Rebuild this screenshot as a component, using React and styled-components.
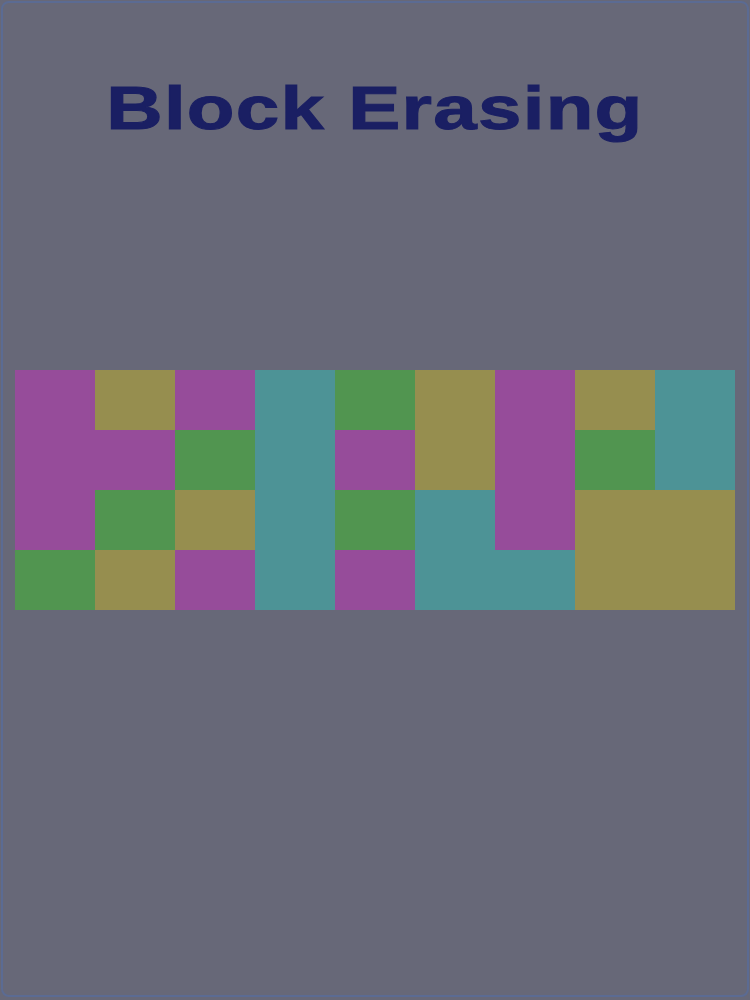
import React from "react";
import styled, { createGlobalStyle } from "styled-components";

const colors = {
  magenta: "#964c9a",
  olive: "#968e4f",
  green: "#519550",
  teal: "#4d9396",
};

// col, row start at 1; w/h in cells
const blocks = [
  { col: 1, row: 1, w: 1, h: 3, c: "magenta" },
  { col: 2, row: 2, w: 1, h: 1, c: "magenta" },
  { col: 1, row: 4, w: 1, h: 1, c: "green" },
  { col: 2, row: 1, w: 1, h: 1, c: "olive" },
  { col: 2, row: 3, w: 1, h: 1, c: "green" },
  { col: 2, row: 4, w: 1, h: 1, c: "olive" },
  { col: 3, row: 1, w: 1, h: 1, c: "magenta" },
  { col: 3, row: 2, w: 1, h: 1, c: "green" },
  { col: 3, row: 3, w: 1, h: 1, c: "olive" },
  { col: 3, row: 4, w: 1, h: 1, c: "magenta" },
  { col: 4, row: 1, w: 1, h: 4, c: "teal" },
  { col: 5, row: 1, w: 1, h: 1, c: "green" },
  { col: 5, row: 2, w: 1, h: 1, c: "magenta" },
  { col: 5, row: 3, w: 1, h: 1, c: "green" },
  { col: 5, row: 4, w: 1, h: 1, c: "magenta" },
  { col: 6, row: 1, w: 1, h: 2, c: "olive" },
  { col: 6, row: 3, w: 1, h: 2, c: "teal" },
  { col: 7, row: 4, w: 1, h: 1, c: "teal" },
  { col: 7, row: 1, w: 1, h: 3, c: "magenta" },
  { col: 8, row: 1, w: 1, h: 1, c: "olive" },
  { col: 8, row: 2, w: 1, h: 1, c: "green" },
  { col: 9, row: 1, w: 1, h: 2, c: "teal" },
  { col: 8, row: 3, w: 2, h: 2, c: "olive" },
];

export default function App() {
  return (
    <>
      <Global />
      <Frame>
        <Titulo>Block Erasing</Titulo>
        <Tabuleiro>
          {blocks.map((b, i) => (
            <Bloco key={i} $col={b.col} $row={b.row} $w={b.w} $h={b.h} $cor={colors[b.c]} />
          ))}
        </Tabuleiro>
      </Frame>
    </>
  );
}

const Global = createGlobalStyle`
  html, body {
    margin: 0;
    padding: 0;
    background: #676878;
  }
`;

const Frame = styled.div`
  box-sizing: border-box;
  width: 748px;
  height: 996px;
  margin: 1px;
  border: 2px solid #5b6b93;
  border-radius: 8px;
  background: #676878;

  display: flex;
  flex-direction: column;
  align-items: center;
`;

const Titulo = styled.h1`
  margin: 75px 0 0 0;
  font-family: "Liberation Sans", Arial, sans-serif;
  font-weight: bold;
  font-size: 61px;
  line-height: 1;
  letter-spacing: 1px;
  transform: scaleX(1.28);
  color: #1a1f63;
  -webkit-text-stroke: 1px #1a1f63;
`;

const Tabuleiro = styled.div`
  margin-top: 231px;
  width: 720px;
  display: grid;
  grid-template-columns: repeat(9, 80px);
  grid-template-rows: repeat(4, 60px);
`;

const Bloco = styled.div`
  grid-column: ${(p) => p.$col} / span ${(p) => p.$w};
  grid-row: ${(p) => p.$row} / span ${(p) => p.$h};
  background: ${(p) => p.$cor};
`;
